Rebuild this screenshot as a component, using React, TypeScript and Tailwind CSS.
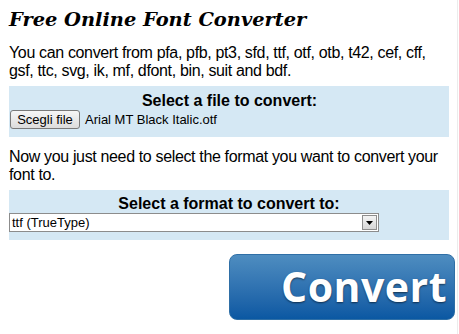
const formats = 'pfa, pfb, pt3, sfd, ttf, otf, otb, t42, cef, cff, gsf, ttc, svg, ik, mf, dfont, bin, suit and bdf.';

export default function App() {
  return (
    <div className="w-[459px] h-[334px] overflow-hidden bg-white text-black font-['Liberation_Sans',Arial,sans-serif]">
      <div className="w-[458px] h-full border-r border-[#ececec] px-[9px]">
        <h1 className="pt-[8px] font-['DejaVu_Serif',Georgia,serif] italic font-bold text-[19.4px] leading-[23px]">
          Free Online Font Converter
        </h1>
        <p className="mt-[13px] text-[16px] leading-[18px] tracking-[-0.35px]">
          You can convert from {formats}
        </p>

        <div className="mt-[6px] w-[440px] bg-[#d5e8f4] pt-[6px] pb-[8px] pl-[1px]">
          <div className="text-center font-bold text-[16px] leading-[18px]">Select a file to convert:</div>
          <div className="flex items-center gap-[5px]">
            <button className="h-[19px] w-[70px] rounded-[3px] border border-[#7a7a7a] bg-linear-to-b from-[#f6f6f6] to-[#dcdcdc] text-[13px] leading-[17px] text-black">
              Scegli file
            </button>
            <span className="text-[13px] leading-[19px]">Arial MT Black Italic.otf</span>
          </div>
        </div>

        <p className="mt-[11px] text-[16px] leading-[18px] tracking-[-0.35px]">
          Now you just need to select the format you want to convert your font to.
        </p>

        <div className="mt-[6px] w-[440px] bg-[#d5e8f4] pt-[5px] pb-[8px]">
          <div className="text-center font-bold text-[16px] leading-[18px]">Select a format to convert to:</div>
          <div className="flex h-[19px] w-[370px] items-center border border-[#8c8c8c] bg-white">
            <span className="flex-1 pl-[2px] text-[13px] leading-[17px]">ttf (TrueType)</span>
            <div className="m-[1px] flex h-[15px] w-[15px] items-center justify-center border border-[#8e8e8e] bg-linear-to-b from-[#f4f4f4] to-[#d6d6d6]">
              <svg width="7" height="4" viewBox="0 0 7 4">
                <path d="M0 0h7L3.5 4z" fill="#000" />
              </svg>
            </div>
          </div>
        </div>

        <div className="mt-[14px] flex">
          <button className="ml-[220px] flex h-[66px] w-[226px] shrink-0 items-center justify-end rounded-[8px] border border-[#2f6fa6] bg-linear-to-b from-[#4e8dc0] to-[#0a58a2] pr-[7px] font-['Open_Sans',sans-serif] text-[41px] font-bold tracking-[0.5px] text-white [text-shadow:0_1px_2px_rgba(0,0,0,0.55)]">
            Convert
          </button>
        </div>
      </div>
    </div>
  );
}
